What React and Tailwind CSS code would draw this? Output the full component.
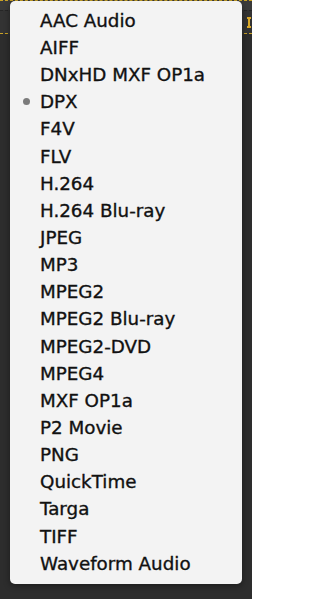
import React from 'react';

const formats = [
  'AAC Audio',
  'AIFF',
  'DNxHD MXF OP1a',
  'DPX',
  'F4V',
  'FLV',
  'H.264',
  'H.264 Blu-ray',
  'JPEG',
  'MP3',
  'MPEG2',
  'MPEG2 Blu-ray',
  'MPEG2-DVD',
  'MPEG4',
  'MXF OP1a',
  'P2 Movie',
  'PNG',
  'QuickTime',
  'Targa',
  'TIFF',
  'Waveform Audio',
];

export default function App() {
  const selected = 'DPX';

  return (
    <div className="relative h-[599px] w-[252px] overflow-hidden bg-[#2d2d2d]">
      {/* background panel behind the menu */}
      <div className="h-[10px] border-t border-dashed border-[#c9a227] bg-[#3a3a3a]" />
      <div className="flex h-[24px] items-center justify-end border-t border-[#262626] border-b border-b-[#c9a227] border-dashed bg-[#333333]">
        {/* edge of a yellow glyph peeking out */}
        <div className="mr-[1px] flex h-[11px] w-[4px] flex-col justify-between">
          <div className="h-[2px] w-[4px] bg-[#d9a82a]" />
          <div className="mx-auto h-[7px] w-[2px] bg-[#d9a82a]" />
          <div className="h-[2px] w-[4px] bg-[#d9a82a]" />
        </div>
      </div>

      {/* popup menu */}
      <div
        className="absolute left-[10px] top-[1px] w-[232px] rounded-[5px] bg-[#f3f3f3] pt-[6px] pb-[7px] shadow-[0_2px_6px_rgba(0,0,0,0.4)]"
        style={{ fontFamily: '"DejaVu Sans", "Liberation Sans", sans-serif' }}
      >
        {formats.map((name) => (
          <div key={name} className="flex h-[27.15px] items-center text-[18.3px] text-[#111111] [-webkit-text-stroke:0.35px_#111111]">
            <div className="flex w-[30px] justify-center">
              {name === selected && <span className="ml-[2px] h-[7px] w-[7px] rounded-full bg-[#7b7b7b]" />}
            </div>
            <span>{name}</span>
          </div>
        ))}
      </div>
    </div>
  );
}
